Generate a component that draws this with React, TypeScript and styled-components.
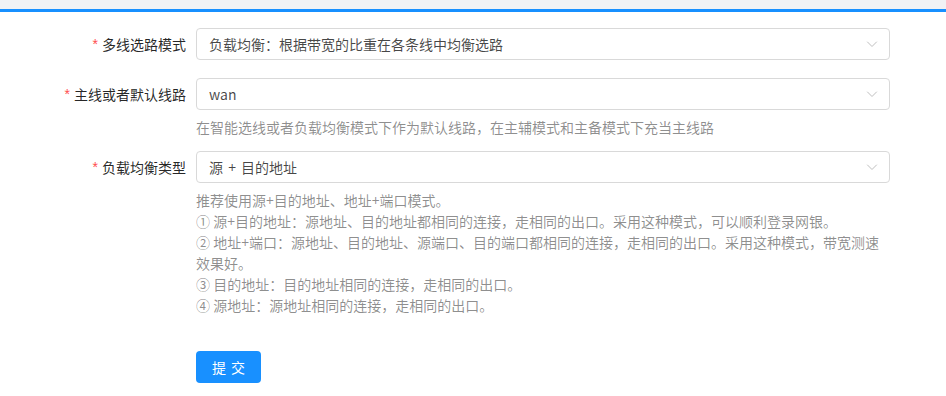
import * as React from "react";
import styled, { createGlobalStyle } from "styled-components";

const GlobalStyle = createGlobalStyle`
  html, body {
    margin: 0;
    padding: 0;
    background: #ffffff;
    font-family: "Noto Sans CJK SC", "Noto Sans", sans-serif;
  }
`;

type Field = {
  label: string;
  value: string;
  help?: string[];
};

const fields: Field[] = [
  { label: "多线选路模式", value: "负载均衡：根据带宽的比重在各条线中均衡选路" },
  {
    label: "主线或者默认线路",
    value: "wan",
    help: ["在智能选线或者负载均衡模式下作为默认线路，在主辅模式和主备模式下充当主线路"],
  },
  {
    label: "负载均衡类型",
    value: "源 + 目的地址",
    help: [
      "推荐使用源+目的地址、地址+端口模式。",
      "① 源+目的地址：源地址、目的地址都相同的连接，走相同的出口。采用这种模式，可以顺利登录网银。",
      "② 地址+端口：源地址、目的地址、源端口、目的端口都相同的连接，走相同的出口。采用这种模式，带宽测速效果好。",
      "③ 目的地址：目的地址相同的连接，走相同的出口。",
      "④ 源地址：源地址相同的连接，走相同的出口。",
    ],
  },
];

const ChevronDown: React.FC = () => (
  <svg width="12" height="12" viewBox="0 0 12 12" fill="none">
    <path d="M1.5 4L6 8.5L10.5 4" stroke="#bfbfbf" strokeWidth="1" strokeLinecap="round" strokeLinejoin="round" />
  </svg>
);

export default function App() {
  return (
    <>
      <GlobalStyle />
      <Page>
        <TopStrip />
        <FormBody>
          {fields.map((f) => (
            <FormItem key={f.label} $hasHelp={!!f.help}>
              <Label>
                <Required>*</Required>
                {f.label}
              </Label>
              <Control>
                <Select>
                  <SelectValue>{f.value}</SelectValue>
                  <Arrow>
                    <ChevronDown />
                  </Arrow>
                </Select>
                {f.help && (
                  <Help>
                    {f.help.map((line) => (
                      <div key={line}>{line}</div>
                    ))}
                  </Help>
                )}
              </Control>
            </FormItem>
          ))}
          <Actions>
            <SubmitButton type="button">提 交</SubmitButton>
          </Actions>
        </FormBody>
      </Page>
    </>
  );
}

const Page = styled.div`
  width: 946px;
  min-height: 396px;
  background: #ffffff;
`;

const TopStrip = styled.div`
  height: 9px;
  background: #f0f2f5;
  border-bottom: 3px solid #1890ff;
`;

const FormBody = styled.div`
  padding: 16px 0 12px;
`;

const FormItem = styled.div<{ $hasHelp: boolean }>`
  display: grid;
  grid-template-columns: 196px 694px;
  margin-bottom: ${(p) => (p.$hasHelp ? "13px" : "18px")};
`;

const Label = styled.label`
  height: 32px;
  display: flex;
  align-items: center;
  justify-content: flex-end;
  padding-right: 10px;
  font-size: 14px;
  color: rgba(0, 0, 0, 0.85);
  white-space: nowrap;
`;

const Required = styled.span`
  color: #ff4d4f;
  font-family: SimSun, "Liberation Sans", sans-serif;
  font-size: 14px;
  margin-right: 4px;
  line-height: 1;
`;

const Control = styled.div`
  display: flex;
  flex-direction: column;
`;

const Select = styled.div`
  box-sizing: border-box;
  height: 32px;
  display: flex;
  align-items: center;
  justify-content: space-between;
  padding: 0 11px 0 12px;
  border: 1px solid #d9d9d9;
  border-radius: 4px;
  background: #ffffff;
`;

const SelectValue = styled.span`
  font-size: 14px;
  color: rgba(0, 0, 0, 0.72);
  word-spacing: 2px;
`;

const Arrow = styled.span`
  display: flex;
  align-items: center;
`;

const Help = styled.div`
  margin-top: 7px;
  font-size: 14px;
  line-height: 21px;
  color: rgba(0, 0, 0, 0.45);
`;

const Actions = styled.div`
  padding-left: 196px;
  margin-top: 35px;
`;

const SubmitButton = styled.button`
  width: 65px;
  height: 32px;
  padding: 0;
  border: none;
  border-radius: 4px;
  background: #1890ff;
  color: #ffffff;
  font-family: "Noto Sans CJK SC", sans-serif;
  font-size: 14px;
  word-spacing: 2px;
  cursor: pointer;
`;
